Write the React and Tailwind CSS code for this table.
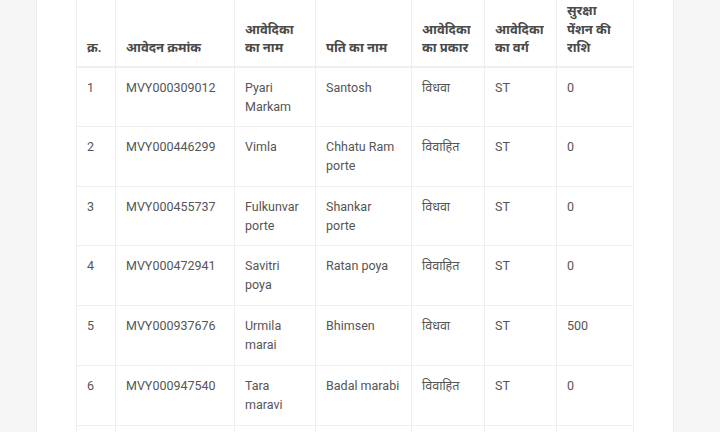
const rows = [
  ['1', 'MVY000309012', 'Pyari Markam', 'Santosh', 'विधवा', 'ST', '0'],
  ['2', 'MVY000446299', 'Vimla', 'Chhatu Ram porte', 'विवाहित', 'ST', '0'],
  ['3', 'MVY000455737', 'Fulkunvar porte', 'Shankar porte', 'विधवा', 'ST', '0'],
  ['4', 'MVY000472941', 'Savitri poya', 'Ratan poya', 'विवाहित', 'ST', '0'],
  ['5', 'MVY000937676', 'Urmila marai', 'Bhimsen', 'विधवा', 'ST', '500'],
  ['6', 'MVY000947540', 'Tara maravi', 'Badal marabi', 'विवाहित', 'ST', '0'],
  ['', '', '', '', '', '', ''],
]

const headers = [
  'क्र.',
  'आवेदन क्रमांक',
  'आवेदिका का नाम',
  'पति का नाम',
  'आवेदिका का प्रकार',
  'आवेदिका का वर्ग',
  'सुरक्षा पेंशन की राशि',
]

const widths = ['w-[39px]', 'w-[119px]', 'w-[81px]', 'w-[96px]', 'w-[73px]', 'w-[72px]', 'w-[77px]']

export default function App() {
  return (
    <div className="h-[432px] overflow-hidden bg-[#f5f5f5] font-['Roboto','Noto_Sans',sans-serif]">
      <div className="ml-[36px] w-[638px] h-full flex flex-col bg-white border-x border-[#ececec]">
        <div className="pl-[39px] -mt-[10px]">
          <table className="table-fixed border-collapse w-[557px] text-[12.5px] leading-[19px]">
            <colgroup>
              {widths.map((w, i) => (
                <col key={i} className={w} />
              ))}
            </colgroup>
            <thead>
              <tr>
                {headers.map((h, i) => (
                  <th
                    key={i}
                    className="border border-[#efefef] border-b-2 align-bottom text-left font-bold text-[#4a4a4a] text-[13px] leading-[18.5px] pl-[10px] pr-[12px] pt-[11px] pb-[8px]"
                  >
                    {h}
                  </th>
                ))}
              </tr>
            </thead>
            <tbody>
              {rows.map((r, i) => (
                <tr key={i}>
                  {r.map((c, j) => (
                    <td
                      key={j}
                      className="border border-[#efefef] align-top text-[#555] px-[10px] pt-[10px] pb-[10px] h-[59.8px]"
                    >
                      {c}
                    </td>
                  ))}
                </tr>
              ))}
            </tbody>
          </table>
        </div>
      </div>
    </div>
  )
}
